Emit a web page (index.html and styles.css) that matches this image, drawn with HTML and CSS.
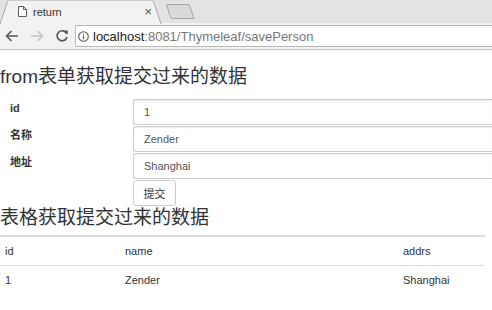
FILE: index.html
```html
<!DOCTYPE html>
<html lang="zh-CN">
<head>
    <meta charset="UTF-8">
    <title>return</title>
    <link rel="stylesheet" href="styles.css">
</head>
<body>

<div class="tabstrip">
    <div class="tab">
        <svg class="tab-shape" width="168" height="24" viewBox="0 0 168 24">
            <path d="M0,24 L7.5,1.5 Q8,0 10,0 L151,0 Q153,0 153.5,1.5 L161,24" fill="#f2f2f2" stroke="#a9a9a9"/>
        </svg>
        <svg class="favicon" width="9" height="11" viewBox="0 0 9 11">
            <path d="M0.5,0.5 H5.5 L8.5,3.5 V10.5 H0.5 Z M5.5,0.5 V3.5 H8.5" fill="#fff" stroke="#5f5f5f"/>
        </svg>
        <span class="tab-title">return</span>
        <span class="tab-close">×</span>
    </div>
    <svg class="newtab" width="32" height="20" viewBox="0 0 32 20">
        <path d="M2.5,2.5 H24 Q25,2.5 25.5,3.5 L30,16.5 H8 Q7,16.5 6.5,15.5 Z" fill="#d9d9d9" stroke="#a6a6a6"/>
    </svg>
</div>

<div class="toolbar">
    <svg class="nav-icon nav-back" width="14" height="14" viewBox="0 0 14 14">
        <path d="M13,7 H2 M6.5,2 L1.5,7 L6.5,12" fill="none" stroke="#5a5a5a" stroke-width="1.6"/>
    </svg>
    <svg class="nav-icon nav-forward" width="14" height="14" viewBox="0 0 14 14">
        <path d="M1,7 H12 M7.5,2 L12.5,7 L7.5,12" fill="none" stroke="#c4c4c4" stroke-width="1.6"/>
    </svg>
    <svg class="nav-icon nav-reload" width="14" height="14" viewBox="0 0 14 14">
        <path d="M11.6,4.5 A5,5 0 1 0 12,8" fill="none" stroke="#5a5a5a" stroke-width="1.7"/>
        <path d="M8.5,1.5 L12.8,1.5 L12.8,5.8 Z" fill="#5a5a5a"/>
    </svg>
    <div class="omnibox">
        <svg class="info-icon" width="11" height="11" viewBox="0 0 11 11">
            <circle cx="5.5" cy="5.5" r="4.8" fill="none" stroke="#5a5a5a" stroke-width="1.1"/>
            <rect x="4.9" y="4.6" width="1.2" height="3.6" fill="#5a5a5a"/>
            <rect x="4.9" y="2.6" width="1.2" height="1.2" fill="#5a5a5a"/>
        </svg>
        <span class="url-host">localhost</span><span class="url-path">:8081/Thymeleaf/savePerson</span>
    </div>
</div>

<div class="page">
    <h3 class="title">from表单获取提交过来的数据</h3>
    <form class="person-form">
        <div class="form-row">
            <label for="pid">id</label>
            <input id="pid" class="form-control" type="text" value="1">
        </div>
        <div class="form-row">
            <label for="pname">名称</label>
            <input id="pname" class="form-control" type="text" value="Zender">
        </div>
        <div class="form-row">
            <label for="paddr">地址</label>
            <input id="paddr" class="form-control" type="text" value="Shanghai">
        </div>
        <div class="form-row">
            <span class="label-gap"></span>
            <button type="button" class="btn">提交</button>
        </div>
    </form>

    <h3 class="title title-table">表格获取提交过来的数据</h3>
    <table class="data-table">
        <thead>
            <tr>
                <th class="col-id">id</th>
                <th>name</th>
                <th class="col-addr">addrs</th>
            </tr>
        </thead>
        <tbody>
            <tr>
                <td>1</td>
                <td>Zender</td>
                <td>Shanghai</td>
            </tr>
        </tbody>
    </table>
</div>

</body>
</html>
```

FILE: styles.css
```css
html, body {
    margin: 0;
    padding: 0;
    overflow: hidden;
    background: #fff;
}
body {
    width: 492px;
    font-family: "Liberation Sans", Arial, "Noto Sans CJK SC", sans-serif;
    color: #333;
}

/* browser chrome */
.tabstrip {
    height: 23px;
    background: #e3e3e3;
    display: flex;
    align-items: flex-start;
}
.tab {
    position: relative;
    width: 162px;
    height: 23px;
    display: flex;
    align-items: center;
    flex: none;
}
.tab-shape {
    position: absolute;
    left: 0;
    top: 0;
}
.favicon {
    position: relative;
    margin-left: 18px;
    margin-top: -1px;
    flex: none;
}
.tab-title {
    position: relative;
    margin-left: 6px;
    font-size: 11px;
    color: #333;
    flex: 1;
}
.tab-close {
    position: relative;
    font-size: 13px;
    color: #555;
    margin-right: 10px;
}
.newtab {
    flex: none;
    margin-left: 2px;
    margin-top: 2px;
}
.toolbar {
    height: 26px;
    background: #f2f2f2;
    border-bottom: 1px solid #bdbdbd;
    display: flex;
    align-items: center;
    padding-left: 5px;
}
.nav-icon {
    flex: none;
}
.nav-back {
    margin-right: 11px;
}
.nav-forward {
    margin-right: 11px;
}
.nav-reload {
    margin-right: 6px;
}
.omnibox {
    flex: 1;
    height: 20px;
    background: #fff;
    border: 1px solid #b9b9b9;
    border-right: none;
    border-radius: 2px 0 0 2px;
    display: flex;
    align-items: center;
    font-size: 13px;
    white-space: nowrap;
}
.info-icon {
    flex: none;
    margin-left: 2px;
    margin-right: 4px;
}
.url-host {
    color: #222;
}
.url-path {
    color: #777;
}

/* page */
.title {
    font-size: 19px;
    font-weight: normal;
    line-height: 22px;
    margin: 16px 0 11px 0;
    white-space: nowrap;
}
.title-table {
    margin: 0 0 6px 0;
}
.person-form {
    margin: 0;
}
.form-row {
    display: flex;
    align-items: flex-start;
    margin-bottom: 1px;
}
.form-row label,
.label-gap {
    width: 123px;
    padding-left: 10px;
    padding-top: 2px;
    font-size: 11px;
    font-weight: bold;
    line-height: 15px;
    flex: none;
}
.form-control {
    box-sizing: border-box;
    flex: 1;
    min-width: 0;
    height: 26px;
    margin: 0;
    padding: 0 10px;
    border: 1px solid #ccc;
    border-right: none;
    border-radius: 3px 0 0 3px;
    box-shadow: inset 0 1px 1px rgba(0, 0, 0, 0.075);
    font-family: inherit;
    font-size: 11px;
    color: #555;
}
.btn {
    box-sizing: border-box;
    width: 43px;
    height: 26px;
    margin: 0;
    padding: 0;
    background: #fff;
    border: 1px solid #ccc;
    border-radius: 3px;
    font-family: inherit;
    font-size: 11px;
    color: #333;
}
.data-table {
    width: 485px;
    border-collapse: collapse;
    border-top: 2px solid #ddd;
    font-size: 11px;
}
.data-table th,
.data-table td {
    text-align: left;
    font-weight: normal;
    padding: 7px 5px 6px 5px;
    line-height: 15px;
}
.data-table td {
    border-top: 1px solid #ddd;
}
.col-id {
    width: 110px;
}
.col-addr {
    width: 77px;
}
```
